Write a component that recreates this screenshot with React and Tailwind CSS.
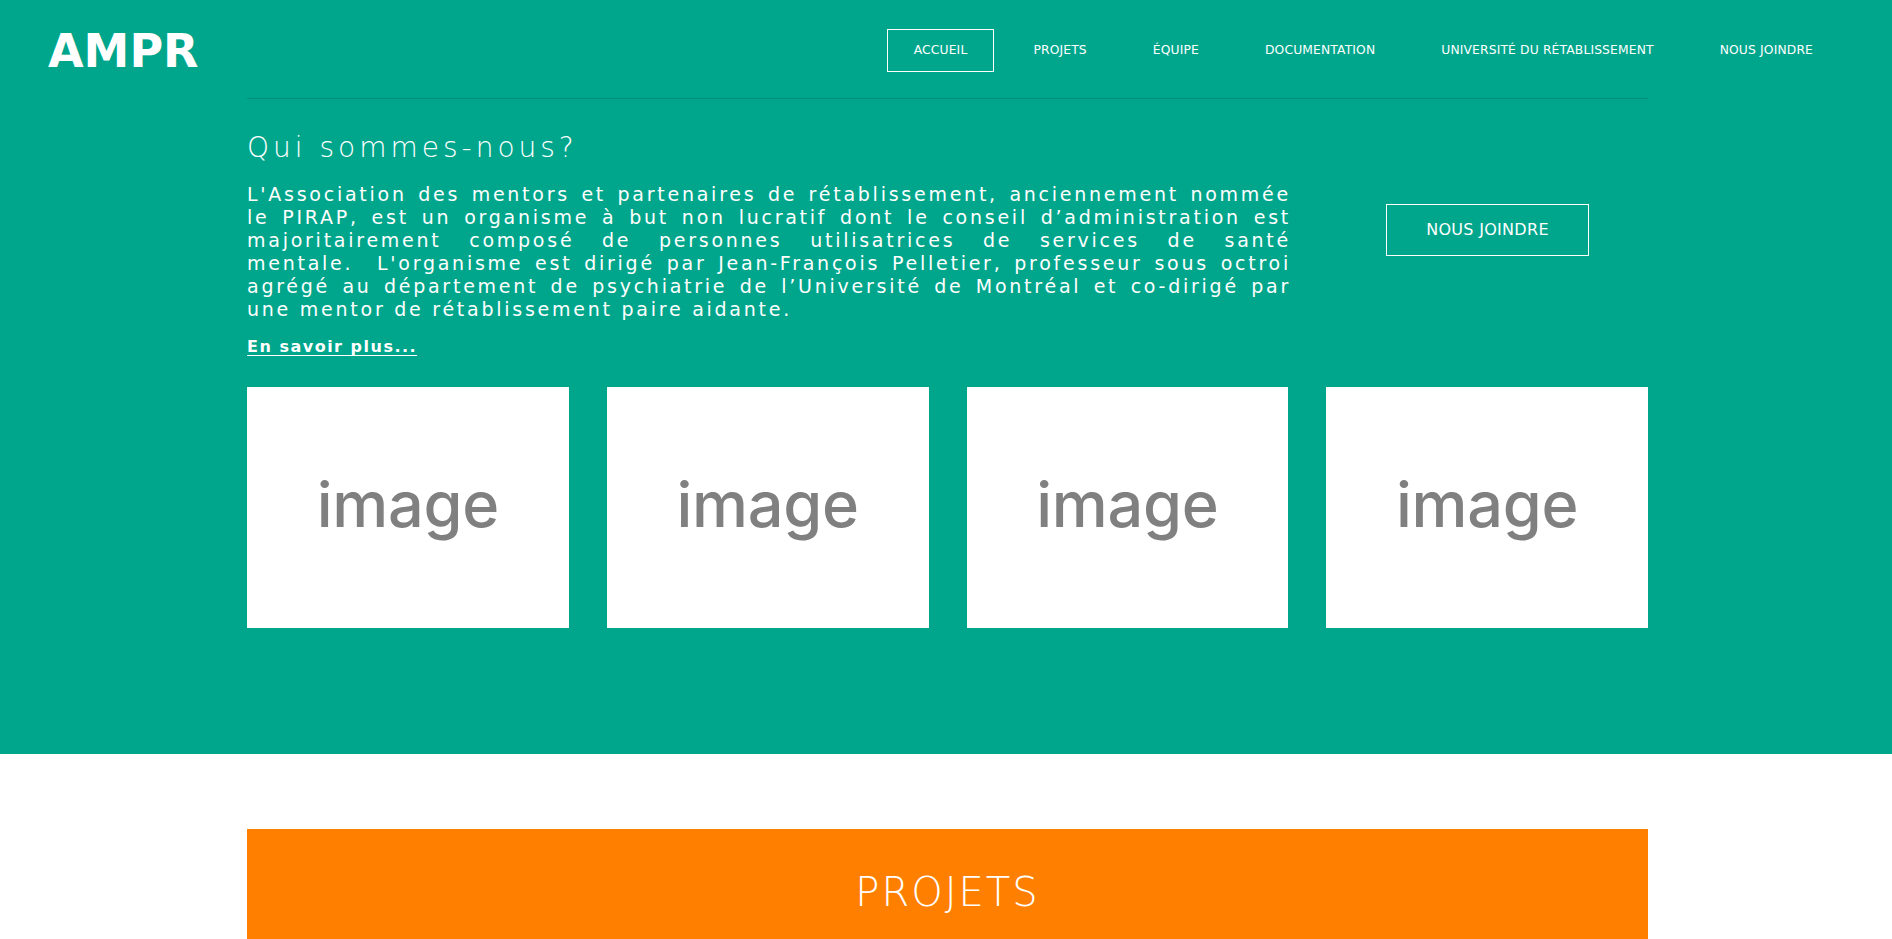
import React from "react";

const navItems = [
  "ACCUEIL",
  "PROJETS",
  "ÉQUIPE",
  "DOCUMENTATION",
  "UNIVERSITÉ DU RÉTABLISSEMENT",
  "NOUS JOINDRE",
];

const lines = [
  "L'Association des mentors et partenaires de rétablissement, anciennement nommée",
  "le PIRAP, est un organisme à but non lucratif dont le conseil d’administration est",
  "majoritairement composé de personnes utilisatrices de services de santé",
  "mentale.  L'organisme est dirigé par Jean-François Pelletier, professeur sous octroi",
  "agrégé au département de psychiatrie de l’Université de Montréal et co-dirigé par",
];

function ImageBox() {
  return (
    <div className="h-[241px] bg-white flex items-center justify-center">
      <span className="text-[63px] leading-none font-medium text-[#808080] font-['Inter',sans-serif] tracking-[-0.3px] pb-[6px]">
        image
      </span>
    </div>
  );
}

export default function App() {
  return (
    <div className="min-h-screen bg-white font-['DejaVu_Sans',sans-serif] text-white">
      <section className="bg-[#00a68c]">
        <header className="h-[98px] flex items-center justify-between pl-[48px] pr-[52px]">
          <div className="text-[46px] leading-[46px] font-bold pt-[4px]">AMPR</div>
          <nav className="flex items-center gap-[12px] mt-[3px]">
            {navItems.map((item, i) => (
              <a
                key={item}
                className={
                  "h-[43px] px-[26px] flex items-center text-[12.3px] tracking-[0.15px] border " +
                  (i === 0 ? "border-white" : "border-transparent")
                }
              >
                {item}
              </a>
            ))}
          </nav>
        </header>
        <div className="w-[1401px] ml-[247px] border-t border-[#008f78] pt-[32px] pb-[126px]">
          <div className="flex">
            <div className="w-[1044px]">
              <h2 className="text-[28px] leading-[34px] font-extralight tracking-[4px] mb-[18px]">
                Qui sommes-nous?
              </h2>
              <div className="text-[19px] leading-[23px] tracking-[2.75px] font-normal">
                {lines.map((l) => (
                  <div key={l} className="whitespace-pre text-justify [text-align-last:justify]">
                    {l}
                  </div>
                ))}
                <div>une mentor de rétablissement paire aidante.</div>
              </div>
              <a className="block mt-[16px] text-[16px] leading-[20px] font-bold tracking-[1.5px] underline underline-offset-[3px]">
                En savoir plus...
              </a>
            </div>
            <div className="pl-[95px] pt-[73px]">
              <button className="w-[203px] h-[52px] border border-white text-[16px] tracking-[0.3px] font-normal text-white">
                NOUS JOINDRE
              </button>
            </div>
          </div>
          <div className="grid grid-cols-4 gap-[38px] mt-[30px]">
            <ImageBox />
            <ImageBox />
            <ImageBox />
            <ImageBox />
          </div>
        </div>
      </section>
      <section className="pt-[75px]">
        <div className="w-[1401px] ml-[247px] bg-[#ff7f00] h-[220px] pt-[39px] text-center">
          <h2 className="text-[40px] leading-[48px] font-extralight tracking-[2px]">PROJETS</h2>
        </div>
      </section>
    </div>
  );
}
